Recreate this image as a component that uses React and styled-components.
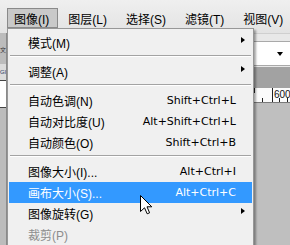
import React from "react";
import styled, { createGlobalStyle } from "styled-components";

const Global = createGlobalStyle`
  html, body { margin: 0; padding: 0; }
  body {
    width: 290px; height: 245px; overflow: hidden; background: #bfbfbf;
    font-family: "Liberation Sans", "Noto Sans CJK SC", sans-serif;
  }
`;

const Screen = styled.div`
  position: relative;
  width: 290px;
  height: 245px;
  overflow: hidden;
  display: flex;
  flex-direction: column;
  background: #bfbfbf;
`;

const MenuBar = styled.div`
  height: 33px;
  box-sizing: border-box;
  padding: 8px 0 0 7px;
  display: flex;
  align-items: flex-start;
  gap: 3px;
  background: linear-gradient(#efefef, #e3e3e3);
`;

const MenuBarItem = styled.div`
  height: 20px;
  box-sizing: border-box;
  padding: 0 8px 0 6px;
  display: flex;
  align-items: center;
  font-size: 12px;
  color: #000;
  white-space: nowrap;
  border: 1px solid ${(p) => (p.$active ? "#8a8a8a" : "transparent")};
  background: ${(p) => (p.$active ? "#c9c9c9" : "transparent")};
`;

const Workspace = styled.div`
  flex: 1;
  display: flex;
  min-height: 0;
`;

const LeftPanel = styled.div`
  width: 6px;
  border-right: 1px solid #8a8a8a;
  background: #bcbcbc;
  display: flex;
  flex-direction: column;
  overflow: hidden;
`;

const PanelGlyph = styled.div`
  height: 29px;
  display: flex;
  align-items: center;
  justify-content: flex-end;
  font-size: 6px;
  color: #333;
  line-height: 1;
  padding-top: 2px;
`;

const PanelLabel = styled.div`
  height: 16px;
  background: #dcdcdc;
  font-size: 6px;
  color: #2a3a66;
  display: flex;
  align-items: center;
  justify-content: flex-end;
  white-space: nowrap;
`;

const PanelInput = styled.div`
  height: 26px;
  background: #fff;
  border-top: 1px solid #444;
  border-bottom: 1px solid #444;
`;

const Main = styled.div`
  flex: 1;
  display: flex;
  flex-direction: column;
  min-width: 0;
`;

const OptionsBar = styled.div`
  height: 34px;
  box-sizing: border-box;
  padding: 7px 0 0 0;
  background: #e8e8e8;
  border-top: 1px solid #cfcfcf;
  display: flex;
  justify-content: flex-end;
`;

const SelectBox = styled.div`
  width: 80px;
  height: 25px;
  box-sizing: border-box;
  background: #fff;
  border: 1px solid #a9a9a9;
  border-right: none;
  display: flex;
  align-items: center;
  justify-content: flex-end;
  padding-right: 7px;
`;

const DownArrow = styled.span`
  width: 0;
  height: 0;
  border-left: 3px solid transparent;
  border-right: 3px solid transparent;
  border-top: 4px solid #000;
`;

const TabBar = styled.div`
  height: 21px;
  background: #a2a2a2;
`;

const Ruler = styled.div`
  height: 15px;
  box-sizing: border-box;
  background: #fbfbfb;
  border-bottom: 1px solid #7a7a7a;
  display: flex;
  justify-content: flex-end;
`;

const RulerSegment = styled.div`
  position: relative;
  width: 36px;
  height: 100%;
`;

const RulerLabel = styled.span`
  position: absolute;
  left: 20px;
  top: 1px;
  font-family: "Liberation Sans", sans-serif;
  font-size: 10px;
  line-height: 11px;
  color: #111;
`;

const Canvas = styled.div`
  flex: 1;
  background: #bfbfbf;
`;

const Dropdown = styled.div`
  position: absolute;
  top: 28px;
  left: 7px;
  width: 247px;
  height: 240px;
  box-sizing: border-box;
  background: #f0f0f0;
  border: 1px solid #979797;
  box-shadow: 2px 2px 2px rgba(0, 0, 0, 0.35);
  padding: 3px 0;
`;

const MenuItem = styled.div`
  height: 21px;
  margin: 0 1px;
  padding-left: 19px;
  display: grid;
  grid-template-columns: 1fr auto 16px;
  align-items: center;
  font-size: 12px;
  white-space: nowrap;
  color: ${(p) => (p.$highlight ? "#fff" : p.$disabled ? "#8d8d8d" : "#000")};
  background: ${(p) => (p.$highlight ? "#3399ff" : "transparent")};
`;

const Shortcut = styled.span`
  font-family: "DejaVu Sans", sans-serif;
  font-size: 11px;
  text-align: right;
`;

const SubArrow = styled.span`
  width: 0;
  height: 0;
  margin-left: 5px;
  margin-top: -5px;
  border-top: 3.5px solid transparent;
  border-bottom: 3.5px solid transparent;
  border-left: 4px solid #000;
`;

const Separator = styled.div`
  height: 8px;
  margin: 0 2px;
  box-sizing: border-box;
  padding-top: 2px;
  &::before {
    content: "";
    display: block;
    border-top: 1px solid #a3a3a3;
    border-bottom: 1px solid #ffffff;
  }
`;

const Cursor = styled.svg`
  position: absolute;
  left: 140px;
  top: 195px;
`;

const menu = [
  { label: "模式(M)", sub: true },
  { sep: true },
  { label: "调整(A)", sub: true },
  { sep: true },
  { label: "自动色调(N)", key: "Shift+Ctrl+L" },
  { label: "自动对比度(U)", key: "Alt+Shift+Ctrl+L" },
  { label: "自动颜色(O)", key: "Shift+Ctrl+B" },
  { sep: true },
  { label: "图像大小(I)...", key: "Alt+Ctrl+I" },
  { label: "画布大小(S)...", key: "Alt+Ctrl+C", highlight: true },
  { label: "图像旋转(G)", sub: true },
  { label: "裁剪(P)", disabled: true },
];

export default function App() {
  return (
    <>
      <Global />
      <Screen>
        <MenuBar>
          <MenuBarItem $active>图像(I)</MenuBarItem>
          <MenuBarItem>图层(L)</MenuBarItem>
          <MenuBarItem>选择(S)</MenuBarItem>
          <MenuBarItem>滤镜(T)</MenuBarItem>
          <MenuBarItem>视图(V)</MenuBarItem>
        </MenuBar>
        <Workspace>
          <LeftPanel>
            <PanelGlyph>文</PanelGlyph>
            <PanelLabel>Gl</PanelLabel>
            <PanelInput />
          </LeftPanel>
          <Main>
            <OptionsBar>
              <SelectBox>
                <DownArrow />
              </SelectBox>
            </OptionsBar>
            <TabBar />
            <Ruler>
              <RulerSegment>
                <svg width="36" height="14" viewBox="0 0 36 14">
                  <g stroke="#222" strokeWidth="1">
                    <line x1="0.5" y1="0" x2="0.5" y2="5" />
                    <line x1="8.5" y1="10" x2="8.5" y2="14" />
                    <line x1="18.5" y1="0" x2="18.5" y2="14" />
                    <line x1="25.5" y1="10" x2="25.5" y2="14" />
                    <line x1="33.5" y1="10" x2="33.5" y2="14" />
                  </g>
                </svg>
                <RulerLabel>600</RulerLabel>
              </RulerSegment>
            </Ruler>
            <Canvas />
          </Main>
        </Workspace>

        <Dropdown>
          {menu.map((m, i) =>
            m.sep ? (
              <Separator key={i} />
            ) : (
              <MenuItem key={i} $highlight={m.highlight} $disabled={m.disabled}>
                <span>{m.label}</span>
                <Shortcut>{m.key || ""}</Shortcut>
                {m.sub ? <SubArrow /> : <span />}
              </MenuItem>
            )
          )}
        </Dropdown>

        <Cursor width="13" height="20" viewBox="0 0 13 20">
          <path
            d="M0.5 0.5 L0.5 16.5 L4.5 12.8 L7.2 18.8 L9.6 17.8 L7 11.8 L11.8 11.8 Z"
            fill="#fff"
            stroke="#000"
            strokeWidth="1"
            strokeLinejoin="miter"
          />
        </Cursor>
      </Screen>
    </>
  );
}
